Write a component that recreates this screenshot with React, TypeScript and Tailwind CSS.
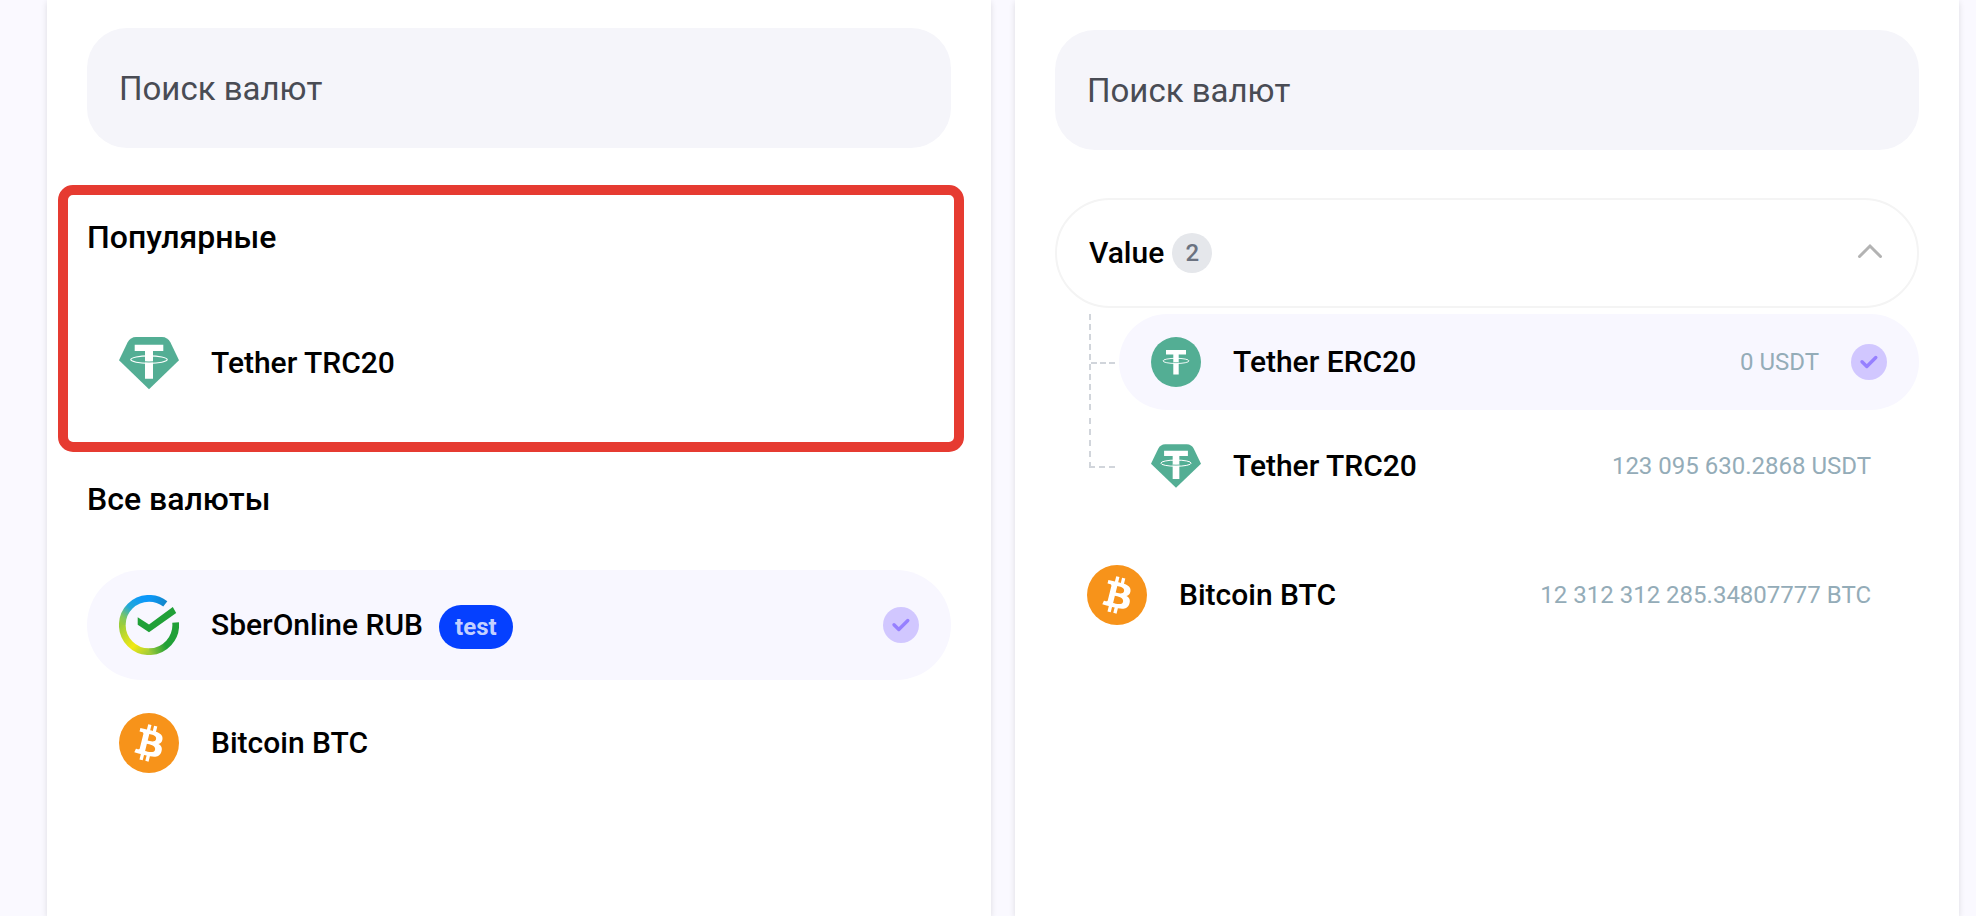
import { useState } from 'react'
import type { ReactNode } from 'react'

interface Currency {
  id: string
  name: string
  icon: 'trc20' | 'erc20' | 'sber' | 'btc'
  tag?: string
  balance?: string
}

const popular: Currency[] = [{ id: 'usdt-trc20', name: 'Tether TRC20', icon: 'trc20' }]

const all: Currency[] = [
  { id: 'sber-rub', name: 'SberOnline RUB', icon: 'sber', tag: 'test' },
  { id: 'btc', name: 'Bitcoin BTC', icon: 'btc' },
]

const grouped: Currency[] = [
  { id: 'usdt-erc20', name: 'Tether ERC20', icon: 'erc20', balance: '0 USDT' },
  { id: 'usdt-trc20', name: 'Tether TRC20', icon: 'trc20', balance: '123 095 630.2868 USDT' },
]

const bitcoin: Currency = { id: 'btc', name: 'Bitcoin BTC', icon: 'btc', balance: '12 312 312 285.34807777 BTC' }

function CurrencyIcon({ icon, small }: { icon: Currency['icon']; small?: boolean }) {
  const size = small ? 'size-[50px] shrink-0' : 'size-[60px] shrink-0'

  if (icon === 'trc20') return (
    <svg className={size} viewBox="0 0 60 60" aria-hidden="true">
      <path d="M17 4H43Q48.5 4 51.5 9.5L60 27.2L30 56.2L0 27.2L8.5 9.5Q11.5 4 17 4Z" fill="#53ae94" />
      <path d="M15.7 11.7H44.3V18H34V45.7H26V18H15.7Z" fill="#fff" />
      <ellipse cx="30" cy="26.6" rx="18.2" ry="3.7" fill="none" stroke="#fff" strokeWidth="1.2" />
      <path d="M26 28.8Q30 29.2 34 28.8" fill="none" stroke="#53ae94" strokeWidth="1" />
    </svg>
  )

  if (icon === 'erc20') return (
    <svg className={size} viewBox="0 0 50 50" aria-hidden="true">
      <circle cx="25" cy="25" r="25" fill="#53ae94" />
      <path d="M15 13H35V17.6H27.7V37.4H22.3V17.6H15Z" fill="#fff" />
      <ellipse cx="25" cy="23.9" rx="13" ry="2.6" fill="none" stroke="#fff" strokeWidth="0.9" />
      <path d="M22.3 25.5Q25 25.8 27.7 25.5" fill="none" stroke="#53ae94" strokeWidth="0.7" />
    </svg>
  )

  if (icon === 'sber') return (
    <svg className={size} viewBox="0 0 60 60" fill="none" strokeWidth="6.7" aria-hidden="true">
      <defs>
        <linearGradient id="sber-right" gradientUnits="userSpaceOnUse" x1="30" y1="57" x2="47" y2="51">
          <stop stopColor="#a2cc39" />
          <stop offset="1" stopColor="#21a038" />
        </linearGradient>
        <linearGradient id="sber-bottom" gradientUnits="userSpaceOnUse" x1="3" y1="29" x2="31" y2="57">
          <stop stopColor="#9bcd3b" />
          <stop offset="0.3" stopColor="#c9dc28" />
          <stop offset="0.6" stopColor="#f2e913" />
          <stop offset="1" stopColor="#a2cc39" />
        </linearGradient>
        <linearGradient id="sber-left" gradientUnits="userSpaceOnUse" x1="3" y1="30" x2="24" y2="4">
          <stop stopColor="#9bcd3b" />
          <stop offset="0.2" stopColor="#84c85a" />
          <stop offset="0.55" stopColor="#23a9d6" />
          <stop offset="1" stopColor="#0c98f9" />
        </linearGradient>
        <linearGradient id="sber-top" gradientUnits="userSpaceOnUse" x1="30" y1="3" x2="47" y2="9">
          <stop stopColor="#0c98f9" />
          <stop offset="1" stopColor="#1386c8" />
        </linearGradient>
      </defs>
      <path d="M56.6 27.5A26.7 26.7 0 0 1 30 56.7" stroke="url(#sber-right)" />
      <path d="M30.2 56.7A26.7 26.7 0 0 1 3.3 29.8" stroke="url(#sber-bottom)" />
      <path d="M3.3 30A26.7 26.7 0 0 1 30 3.3" stroke="url(#sber-left)" />
      <path d="M29.8 3.3A26.7 26.7 0 0 1 46.3 8.8" stroke="url(#sber-top)" />
      <path d="M18.7 22.3L30 29.6L53.8 12L57.2 18L30 37.3L18.7 29.7Z" fill="#21a038" />
    </svg>
  )

  return (
    <svg className={size} viewBox="0 0 32 32" aria-hidden="true">
      <circle cx="16" cy="16" r="16" fill="#f7931a" />
      <path
        fill="#fff"
        d="M23.189 14.02c.314-2.096-1.283-3.223-3.465-3.975l.708-2.84-1.728-.43-.69 2.765c-.454-.114-.92-.22-1.385-.326l.695-2.783L15.596 6l-.708 2.839c-.376-.086-.746-.17-1.104-.26l.002-.009-2.384-.595-.46 1.846s1.283.294 1.256.312c.7.175.826.638.805 1.006l-.806 3.235c.048.012.11.03.18.057l-.183-.045-1.13 4.532c-.086.212-.303.531-.793.41.018.025-1.256-.313-1.256-.313l-.858 1.978 2.25.561c.418.105.828.215 1.231.318l-.715 2.872 1.727.43.708-2.84c.472.127.93.245 1.378.357l-.706 2.828 1.728.43.715-2.866c2.948.558 5.164.333 6.097-2.333.752-2.146-.037-3.385-1.588-4.192 1.13-.26 1.98-1.003 2.207-2.538zm-3.95 5.538c-.533 2.147-4.148.986-5.32.695l.95-3.805c1.172.293 4.929.872 4.37 3.11zm.535-5.569c-.487 1.953-3.495.96-4.47.717l.86-3.45c.975.243 4.118.696 3.61 2.733z"
      />
    </svg>
  )
}

function SelectedMark() {
  return (
    <svg className="size-9 shrink-0" viewBox="0 0 36 36" fill="none" aria-hidden="true">
      <circle cx="18" cy="18" r="18" fill="#d1c7ff" />
      <path d="M11 17.8L15.8 22.5L24.8 13.5" stroke="#9680ff" strokeWidth="3.4" strokeLinecap="round" strokeLinejoin="round" />
    </svg>
  )
}

interface RowProps {
  currency: Currency
  selected: boolean
  onSelect: (id: string) => void
  small?: boolean
}

function CurrencyRow({ currency, selected, onSelect, small }: RowProps) {
  return (
    <button
      type="button"
      aria-pressed={selected}
      onClick={() => onSelect(currency.id)}
      className={`flex w-full items-center gap-8 rounded-full pl-8 text-left ${small ? 'h-24' : 'h-[110px]'} ${selected ? 'bg-[#f8f7ff] pr-8' : 'pr-12'}`}
    >
      <CurrencyIcon icon={currency.icon} small={small} />
      <span className="flex flex-1 items-center gap-4">
        <span className="text-3xl leading-9 font-medium text-black">{currency.name}</span>
        {currency.tag && (
          <span className="mt-1 rounded-full bg-[#0540ff] px-4 text-2xl leading-[44px] font-bold text-[#c3d0ff]">
            {currency.tag}
          </span>
        )}
      </span>
      {currency.balance && <span className="text-2xl leading-8 text-[#94acb8]">{currency.balance}</span>}
      {selected && <SelectedMark />}
    </button>
  )
}

function SearchField() {
  return (
    <input
      type="text"
      aria-label="Поиск валют"
      placeholder="Поиск валют"
      className="h-[120px] w-full rounded-[40px] bg-[#f5f5fa] px-8 text-[33px] text-black outline-none placeholder:text-[#494c54]"
    />
  )
}

function SectionTitle({ children }: { children: ReactNode }) {
  return <h2 className="mb-12 text-[32px] leading-[46px] font-medium text-black">{children}</h2>
}

export default function App() {
  const [from, setFrom] = useState('sber-rub')
  const [to, setTo] = useState('usdt-erc20')
  const [open, setOpen] = useState(true)

  return (
    <div className="flex min-h-screen gap-6 bg-[#faf9ff] pr-[17px] pl-[47px] font-['Roboto',sans-serif]">
      <div className="flex min-w-0 flex-1 flex-col bg-white px-10 pt-7 pb-10 shadow-[0_2px_6px_rgba(0,0,0,0.12)]">
        <SearchField />

        <section className="relative mt-[66px]">
          <SectionTitle>Популярные</SectionTitle>
          {popular.map(c => (
            <CurrencyRow key={c.id} currency={c} selected={from === c.id} onSelect={setFrom} />
          ))}
          <div className="pointer-events-none absolute -top-[29px] -right-[13px] -bottom-[34px] -left-[29px] rounded-[15px] border-10 border-[#e63b31]" />
        </section>

        <section className="mt-[58px]">
          <SectionTitle>Все валюты</SectionTitle>
          <div className="flex flex-col gap-2">
            {all.map(c => (
              <CurrencyRow key={c.id} currency={c} selected={from === c.id} onSelect={setFrom} />
            ))}
          </div>
        </section>
      </div>

      <div className="flex min-w-0 flex-1 flex-col bg-white px-10 pt-[30px] pb-10 shadow-[0_2px_6px_rgba(0,0,0,0.12)]">
        <SearchField />

        <button
          type="button"
          aria-expanded={open}
          onClick={() => setOpen(!open)}
          className="mt-12 flex h-[110px] w-full items-center gap-2 rounded-full border-2 border-[#f4f4f4] px-8"
        >
          <span className="text-3xl leading-9 font-medium text-black">Value</span>
          <span className="flex size-10 items-center justify-center rounded-full bg-[#e5e7eb] text-2xl font-medium text-[#6b7280]">
            {grouped.length}
          </span>
          <svg
            className={`mb-1 ml-auto h-4 w-7 ${open ? '' : 'rotate-180'}`}
            viewBox="0 0 28 16"
            fill="none"
            aria-hidden="true"
          >
            <path d="M2.5 13.5L13 3L23.5 13.5" stroke="#b3b3b3" strokeWidth="3" strokeLinecap="round" />
          </svg>
        </button>

        {open && (
          <ul className="mt-1.5 flex flex-col gap-2 pl-[34px]">
            {grouped.map((c, i) => (
              <li key={c.id} className="flex gap-1">
                {/* tree connector, the last one stops at the row's middle */}
                {i === grouped.length - 1 ? (
                  <div className="h-[50px] w-[26px] shrink-0 border-b-2 border-l-2 border-dashed border-[#d1d5db]" />
                ) : (
                  <div className="w-[26px] shrink-0 border-l-2 border-dashed border-[#d1d5db] pt-12">
                    <div className="border-t-2 border-dashed border-[#d1d5db]" />
                  </div>
                )}
                <CurrencyRow currency={c} selected={to === c.id} onSelect={setTo} small />
              </li>
            ))}
          </ul>
        )}

        <div className="mt-[26px]">
          <CurrencyRow currency={bitcoin} selected={to === bitcoin.id} onSelect={setTo} />
        </div>
      </div>
    </div>
  )
}
